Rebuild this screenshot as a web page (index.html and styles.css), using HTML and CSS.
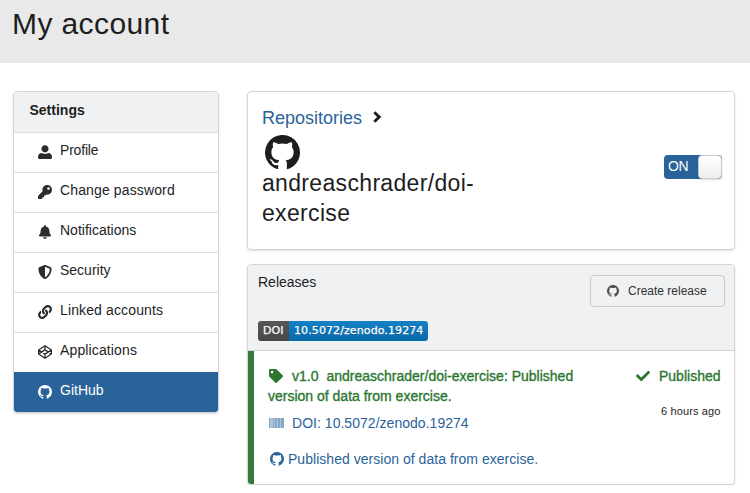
FILE: index.html
```html
<!DOCTYPE html>
<html lang="en">
<head>
<meta charset="utf-8">
<title>My account</title>
<link rel="stylesheet" href="styles.css">
</head>
<body>
<svg class="sprite" aria-hidden="true">
  <symbol id="github" viewBox="128 128 1536 1536"><path d="M896 128q209 0 385.5 103t279.5 279.5 103 385.5q0 251-146.5 451.5t-378.5 277.5q-27 5-40-7t-13-30q0-3 .5-76.5t.5-134.5q0-97-52-142 57-6 102.5-18t94-39 81-66.5 53-105 20.5-150.5q0-119-79-206 37-91-8-204-28-9-81 11t-92 44l-38 24q-93-26-192-26t-192 26q-16-11-42.5-27t-83.5-38.5-85-13.5q-45 113-8 204-79 87-79 206 0 85 20.5 150t52.5 105 80.5 67 94 39 102.5 18q-39 36-49 102-21 10-45 15t-57 5-65.5-21.5-55.5-62.5q-19-32-48.5-52t-49.5-24l-20-3q-21 0-29 4.5t-5 11.5 9 14 13 12l7 5q22 10 43.5 38t31.5 51l10 23q13 38 44 61.5t67 30 69.5 7 55.5-3.5l23-4q0 38 .5 88.5t.5 54.5q0 18-13 30t-40 7q-232-77-378.5-277.5t-146.5-451.5q0-209 103-385.5t279.5-279.5 385.5-103z"/></symbol>
  <symbol id="user" viewBox="0 0 512 512"><path d="M256 270c75 0 130-57 130-132S331 8 256 8 126 63 126 138s55 132 130 132zM120 296C50 305 0 365 0 435v30c0 25 18 43 43 43h426c25 0 43-18 43-43v-30c0-70-50-130-120-139-80 40-192 40-272 0z"/></symbol>
  <symbol id="key" viewBox="0 0 512 512"><path d="M512 176C512 273.2 433.2 352 336 352c-11.2 0-22.2-1-32.8-3l-24 27a24 24 0 0 1-18 8H224v40c0 13.3-10.7 24-24 24h-40v40c0 13.3-10.7 24-24 24H24c-13.3 0-24-10.7-24-24v-78c0-6.400 2.500-12.500 7-17l161.800-161.800C163.100 213.800 160 195.300 160 176 160 78.800 238.800 0 336 0c97.500 0 176 78.500 176 176zM336 128c0 26.500 21.500 48 48 48s48-21.500 48-48-21.500-48-48-48-48 21.500-48 48z"/></symbol>
  <symbol id="bell" viewBox="-32 0 512 512"><path d="M224 512c35.320 0 63.970-28.650 63.970-64H160.030c0 35.350 28.650 64 63.970 64zm215.390-149.710c-19.320-20.760-55.470-51.990-55.470-154.290 0-77.700-54.480-139.900-127.940-155.160V32c0-17.670-14.320-32-31.980-32s-31.980 14.330-31.980 32v20.840C118.560 68.100 64.080 130.300 64.080 208c0 102.300-36.150 133.530-55.470 154.290-6 6.450-8.660 14.160-8.610 21.710.11 16.400 12.980 32 32.100 32h383.800c19.120 0 32-15.600 32.100-32 .05-7.550-2.610-15.270-8.610-21.710z"/></symbol>
  <symbol id="shield" viewBox="0 0 512 512"><path d="M466.500 83.700l-192-80a48.150 48.150 0 0 0-36.900 0l-192 80C27.700 91.100 16 108.600 16 128c0 198.500 114.500 335.700 221.500 380.300 11.800 4.900 25.100 4.900 36.900 0C360.100 472.600 496 349.300 496 128c0-19.400-11.700-36.900-29.500-44.300zM256.100 446.300l-.1-381 175.900 73.300c-3.300 151.400-82.100 261.100-175.800 307.700z"/></symbol>
  <symbol id="link" viewBox="0 0 512 512"><path d="M326.612 185.391c59.747 59.809 58.927 155.698.36 214.590-.11.12-.24.25-.36.37l-67.200 67.200c-59.270 59.270-155.699 59.262-214.960 0-59.270-59.260-59.270-155.700 0-214.960l37.106-37.106c9.840-9.840 26.786-3.300 27.294 10.606.648 17.722 3.826 35.527 9.690 52.721 1.986 5.822.567 12.262-3.783 16.612l-13.087 13.087c-28.026 28.026-28.905 73.660-1.155 101.960 28.024 28.579 74.086 28.749 102.325.51l67.200-67.190c28.191-28.191 28.073-73.757 0-101.830-3.701-3.694-7.429-6.564-10.341-8.569a16.037 16.037 0 0 1-6.947-12.606c-.396-10.567 3.348-21.456 11.698-29.806l21.054-21.055c5.521-5.521 14.182-6.199 20.584-1.731a152.482 152.482 0 0 1 20.522 17.197zM467.547 44.449c-59.261-59.262-155.690-59.270-214.960 0l-67.200 67.200c-.12.12-.25.25-.36.37-58.566 58.892-59.387 154.781.36 214.590a152.454 152.454 0 0 0 20.521 17.196c6.402 4.468 15.064 3.789 20.584-1.731l21.054-21.055c8.350-8.350 12.094-19.239 11.698-29.806a16.037 16.037 0 0 0-6.947-12.606c-2.912-2.005-6.640-4.875-10.341-8.569-28.073-28.073-28.191-73.639 0-101.830l67.200-67.190c28.239-28.239 74.300-28.069 102.325.51 27.750 28.300 26.872 73.934-1.155 101.960l-13.087 13.087c-4.350 4.350-5.769 10.790-3.783 16.612 5.864 17.194 9.042 34.999 9.690 52.721.509 13.906 17.454 20.446 27.294 10.606l37.106-37.106c59.271-59.259 59.271-155.699.001-214.959z"/></symbol>
  <symbol id="codepen" viewBox="0 0 512 512"><path fill="none" stroke="currentColor" stroke-width="46" stroke-linejoin="round" d="M256 25 490 180V332L256 487 22 332V180ZM256 25V178L490 332M256 178 22 332M256 487V334L490 180M256 334 22 180"/></symbol>
  <symbol id="tag" viewBox="0 0 512 512"><path d="M0 252.118V48C0 21.490 21.490 0 48 0h204.118a48 48 0 0 1 33.941 14.059l211.882 211.882c18.745 18.745 18.745 49.137 0 67.882L293.823 497.941c-18.745 18.745-49.137 18.745-67.882 0L14.059 286.059A48 48 0 0 1 0 252.118zM112 64c-26.510 0-48 21.490-48 48s21.490 48 48 48 48-21.490 48-48-21.490-48-48-48z"/></symbol>
  <symbol id="check" viewBox="0 0 512 512"><path d="M173.898 439.404l-166.400-166.400c-9.997-9.997-9.997-26.206 0-36.204l36.203-36.204c9.997-9.998 26.207-9.998 36.204 0L192 312.690 432.095 72.596c9.997-9.997 26.207-9.997 36.204 0l36.203 36.204c9.997 9.997 9.997 26.206 0 36.204l-294.400 294.401c-9.998 9.997-26.207 9.997-36.204-.001z"/></symbol>
  <symbol id="chevron" viewBox="0 0 9 12"><path fill="none" stroke="currentColor" stroke-width="2.900" d="M1.300 1.200 6.200 6 1.300 10.800"/></symbol>
  <symbol id="barcode" viewBox="0 0 15 10"><path opacity=".38" d="M0 0h15v10H0z"/><path opacity=".3" d="M0 0h1v10H0zM4 0h1v10H4zM6 0h2v10H6zM9 0h2v10H9zM12 0h3v10h-3z"/></symbol>
</svg>

<header class="page-header"><h1>My account</h1></header>

<main class="layout">
  <nav class="menu">
    <h2 class="menu-title">Settings</h2>
    <a class="menu-item"><svg class="icon"><use href="#user"/></svg><span class="tight">Profile</span></a>
    <a class="menu-item"><svg class="icon"><use href="#key"/></svg><span>Change password</span></a>
    <a class="menu-item"><svg class="icon"><use href="#bell"/></svg><span class="even">Notifications</span></a>
    <a class="menu-item"><svg class="icon"><use href="#shield"/></svg><span class="even">Security</span></a>
    <a class="menu-item"><svg class="icon"><use href="#link"/></svg><span>Linked accounts</span></a>
    <a class="menu-item"><svg class="icon"><use href="#codepen"/></svg><span>Applications</span></a>
    <a class="menu-item active"><svg class="icon"><use href="#github"/></svg><span class="even">GitHub</span></a>
  </nav>

  <div class="content">
    <section class="card repo">
      <div class="repo-info">
        <div class="crumb"><a>Repositories</a><svg class="chevron"><use href="#chevron"/></svg></div>
        <svg class="repo-logo"><use href="#github"/></svg>
        <h2 class="repo-name">andreaschrader/doi-<br>exercise</h2>
      </div>
      <div class="switch"><span class="switch-on">ON</span><span class="switch-knob"></span></div>
    </section>

    <section class="card releases">
      <div class="releases-head">
        <div class="releases-left">
          <h3>Releases</h3>
          <div class="doi-badge"><span class="doi-label">DOI</span><span class="doi-value">10.5072/zenodo.19274</span></div>
        </div>
        <button class="create"><svg class="create-icon"><use href="#github"/></svg><span>Create release</span></button>
      </div>
      <div class="release">
        <div class="release-main">
          <div class="release-title"><svg class="icon"><use href="#tag"/></svg><span class="version">v1.0</span><span class="name">andreaschrader/doi-exercise: Published</span></div>
          <div class="release-title rest">version of data from exercise.</div>
          <a class="release-link doi"><svg class="barcode"><use href="#barcode"/></svg><span>DOI: 10.5072/zenodo.19274</span></a>
          <a class="release-link source"><svg class="icon"><use href="#github"/></svg><span>Published version of data from exercise.</span></a>
        </div>
        <div class="release-status">
          <div class="status"><svg class="icon"><use href="#check"/></svg><span>Published</span></div>
          <div class="time">6 hours ago</div>
        </div>
      </div>
    </section>
  </div>
</main>
</body>
</html>
```
FILE: styles.css
```css
* { box-sizing: border-box; }
body {
  margin: 0;
  background: #fff;
  color: #1e1e1f;
  font-family: "Liberation Sans", Arial, sans-serif;
  font-size: 14px;
}
h1, h2, h3 { margin: 0; font-weight: normal; }
svg { display: block; flex: none; fill: currentColor; }
.sprite { position: absolute; width: 0; height: 0; }
.icon { width: 14px; height: 14px; }

.page-header { height: 63px; padding: 6px 12px; background: #e9e9e9; }
.page-header h1 { font-size: 30px; line-height: 36px; letter-spacing: .4px; }

.layout { display: flex; align-items: flex-start; gap: 28px; padding: 28px 15px 0 13px; }

.menu {
  width: 206px;
  border: 1px solid #d4d4d5;
  border-radius: 4px;
  overflow: hidden;
  box-shadow: 0 1px 2px rgba(34, 36, 38, .15);
}
.menu-title { height: 40px; padding-left: 15.5px; background: #f0f1f3; font-size: 14px; font-weight: bold; line-height: 37px; }
.menu-item {
  display: flex;
  gap: 8px;
  height: 40px;
  padding-left: 24px;
  border-top: 1px solid #dededf;
  line-height: 34px;
  letter-spacing: .13px;
}
.menu-item .even { letter-spacing: 0; }
.menu-item .tight { letter-spacing: -.2px; }
.menu-item .icon { margin-top: 12px; color: #2c2c2d; }
.menu-item.active { background: #2a6399; border-color: #2a6399; color: #fff; }
.menu-item.active .icon { color: #fff; }

.content { flex: 1; display: flex; flex-direction: column; gap: 14px; }
.card {
  border: 1px solid #d4d4d5;
  border-radius: 4px;
  overflow: hidden;
  box-shadow: 0 1px 2px rgba(34, 36, 38, .15);
}

.repo { display: flex; justify-content: space-between; height: 159px; padding: 14px 12px 0 14px; }
.crumb { display: flex; gap: 11px; height: 24px; font-size: 18px; line-height: 24px; }
.crumb a, .release-link { color: #2a6399; }
.chevron { width: 9px; height: 12px; margin-top: 5px; }
.repo-logo { width: 35px; height: 35px; margin: 5px 0 0 3px; }
.repo-name { font-size: 23px; line-height: 30px; margin-top: -2px; letter-spacing: .33px; }

.switch { display: flex; width: 58px; height: 24px; margin-top: 49px; border-radius: 4px; background: #2a6399; color: #fff; }
.switch-on { width: 34px; padding-left: 4px; line-height: 23px; letter-spacing: -.4px; }
.switch-knob {
  width: 24px;
  border: 1px solid #cbcbcc;
  border-radius: 4px;
  background: linear-gradient(#fff, #eee);
  box-shadow: 0 1px 2px rgba(0, 0, 0, .15);
}

.releases { height: 221px; }
.releases-head { display: flex; justify-content: space-between; height: 86px; padding: 8px 9px 0 10px; background: #f0f1f3; border-bottom: 1px solid #d4d4d5; }
.releases-head h3 { font-size: 14px; line-height: 18px; }
.doi-badge {
  display: flex;
  width: 170px;
  height: 20px;
  margin-top: 30px;
  border-radius: 3px;
  overflow: hidden;
  color: #fff;
  font: 11px/20px "DejaVu Sans", sans-serif;
  letter-spacing: .1px;
  text-shadow: 0 1px 0 rgba(1, 1, 1, .3);
  -webkit-text-stroke: .25px #fff;
  white-space: nowrap;
}
.doi-label { width: 31px; padding-left: 5px; background: linear-gradient(#575757, #474747); }
.doi-value { flex: 1; padding-left: 5px; background: linear-gradient(#1382c5, #0869aa); }
.create {
  display: flex;
  gap: 9px;
  width: 135px;
  height: 32px;
  margin-top: 2px;
  padding: 0 0 0 16px;
  border: 1px solid #cacbcd;
  border-radius: 4px;
  background: transparent;
  color: #333;
  font: 12px/30px "Liberation Sans", Arial, sans-serif;
}
.create-icon { width: 12px; height: 12px; margin-top: 9px; color: #4c4d4e; }

.release { display: flex; justify-content: space-between; height: 134px; padding: 15px 13.5px 0 14px; border-left: 6px solid #347a39; }
.release-title, .status { display: flex; color: #2b7730; line-height: 20px; -webkit-text-stroke: .35px currentColor; white-space: nowrap; }
.release-title .icon { margin: 3px 9px 0 1px; }
.version { margin-right: 8px; }
.release-link { display: flex; line-height: 20px; letter-spacing: .03px; }
.doi { gap: 8px; margin-top: 7px; }
.barcode { width: 15px; height: 10px; margin: 5px 0 0 1px; }
.source { gap: 4px; margin-top: 16px; }
.source .icon { margin: 3px 0 0 2px; }
.status { gap: 9px; }
.status .icon { margin-top: 3px; }
.time { margin-top: 17px; font-size: 11px; line-height: 16px; text-align: right; letter-spacing: .12px; }
```
